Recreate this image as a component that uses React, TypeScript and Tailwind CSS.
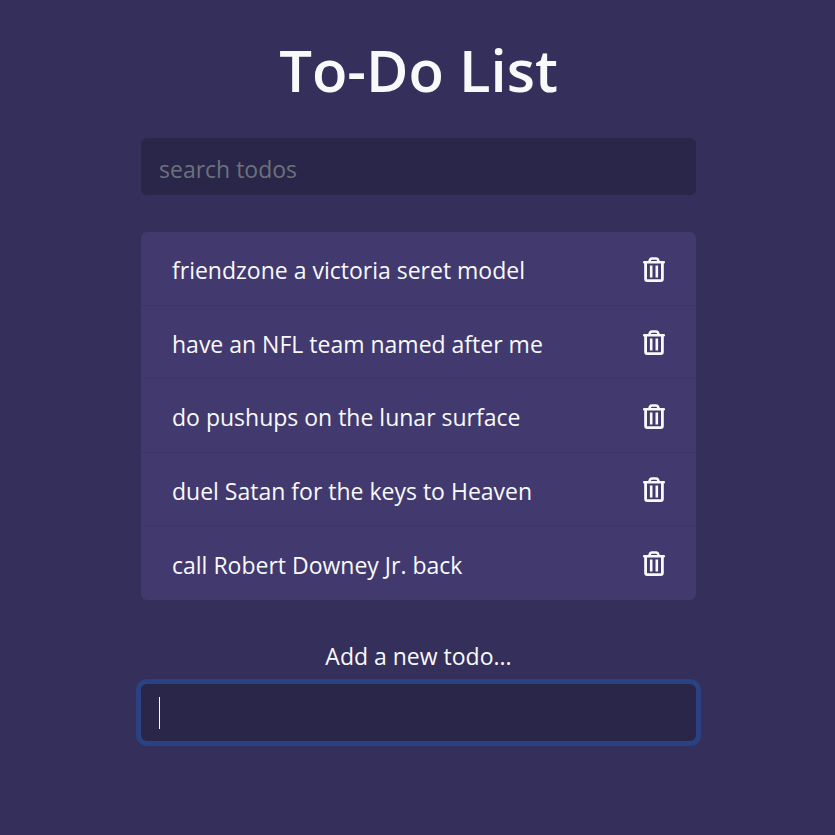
import { useState } from "react";

const initialTodos = [
  "friendzone a victoria seret model",
  "have an NFL team named after me",
  "do pushups on the lunar surface",
  "duel Satan for the keys to Heaven",
  "call Robert Downey Jr. back",
];

function TrashIcon() {
  return (
    <svg
      viewBox="0 0 22 25"
      aria-hidden="true"
      className="h-[25px] w-[22px]"
      fill="none"
      stroke="currentColor"
      strokeWidth="2.5"
    >
      <path d="M1.2 5.2h19.6" strokeLinecap="round" />
      <path d="M6.3 4.8C6.7 2.6 7.4 1.6 9 1.6h4c1.6 0 2.3 1 2.7 3.2" />
      <path d="M2.6 5v17q0 1.6 1.6 1.6h13.6q1.6 0 1.6-1.6V5" strokeWidth="2.8" />
      <path d="M8.2 8.5v12M13.8 8.5v12" strokeWidth="2.6" />
    </svg>
  );
}

export default function App() {
  const [todos, setTodos] = useState(initialTodos);
  const [search, setSearch] = useState("");
  const [draft, setDraft] = useState("");
  const visible = todos.filter((todo) =>
    todo.toLowerCase().includes(search.toLowerCase()),
  );

  return (
    <div className="min-h-screen bg-[#352f5b] pt-7 pr-4 pl-[18px] font-['Segoe_UI','Open_Sans',sans-serif] text-[23px] text-[#f8f9fa]">
      <main className="mx-auto w-full max-w-[555px]">
        <header className="text-center">
          <h1 className="text-[58px] leading-[84px] font-semibold">To-Do List</h1>
          <input
            type="text"
            aria-label="search todos"
            placeholder="search todos"
            value={search}
            onChange={(e) => setSearch(e.target.value)}
            className="mt-[26px] block h-[57px] w-full rounded-md bg-[#2a2649] px-[18px] pt-1 text-[#f8f9fa] outline-none placeholder:text-[#6a727c]"
          />
        </header>

        <ul className="mt-[37px] divide-y divide-[#3c3565] overflow-hidden rounded-md bg-[#423a6f]">
          {visible.map((todo) => (
            <li
              key={todo}
              className="flex h-[74px] items-center justify-between px-[31px] even:h-[73px]"
            >
              <span className="pt-1">{todo}</span>
              <button
                type="button"
                aria-label={`Delete ${todo}`}
                onClick={() => setTodos(todos.filter((t) => t !== todo))}
                className="cursor-pointer pt-px"
              >
                <TrashIcon />
              </button>
            </li>
          ))}
        </ul>

        <form
          className="mt-[38px] text-center"
          onSubmit={(e) => {
            e.preventDefault();
            if (draft.trim()) setTodos([...todos, draft.trim()]);
            setDraft("");
          }}
        >
          <label htmlFor="add" className="block leading-9">
            Add a new todo...
          </label>
          <div className="relative mt-[10px]">
            <input
              id="add"
              type="text"
              value={draft}
              onChange={(e) => setDraft(e.target.value)}
              className="peer block h-[57px] w-full rounded-md bg-[#2a2649] px-[18px] text-[#f8f9fa] ring-5 ring-[#284284] outline-none"
            />
            {draft === "" && (
              <span className="pointer-events-none absolute top-[13px] left-[18px] h-8 w-px bg-[#f8f9fa] peer-focus:hidden" />
            )}
          </div>
        </form>
      </main>
    </div>
  );
}
